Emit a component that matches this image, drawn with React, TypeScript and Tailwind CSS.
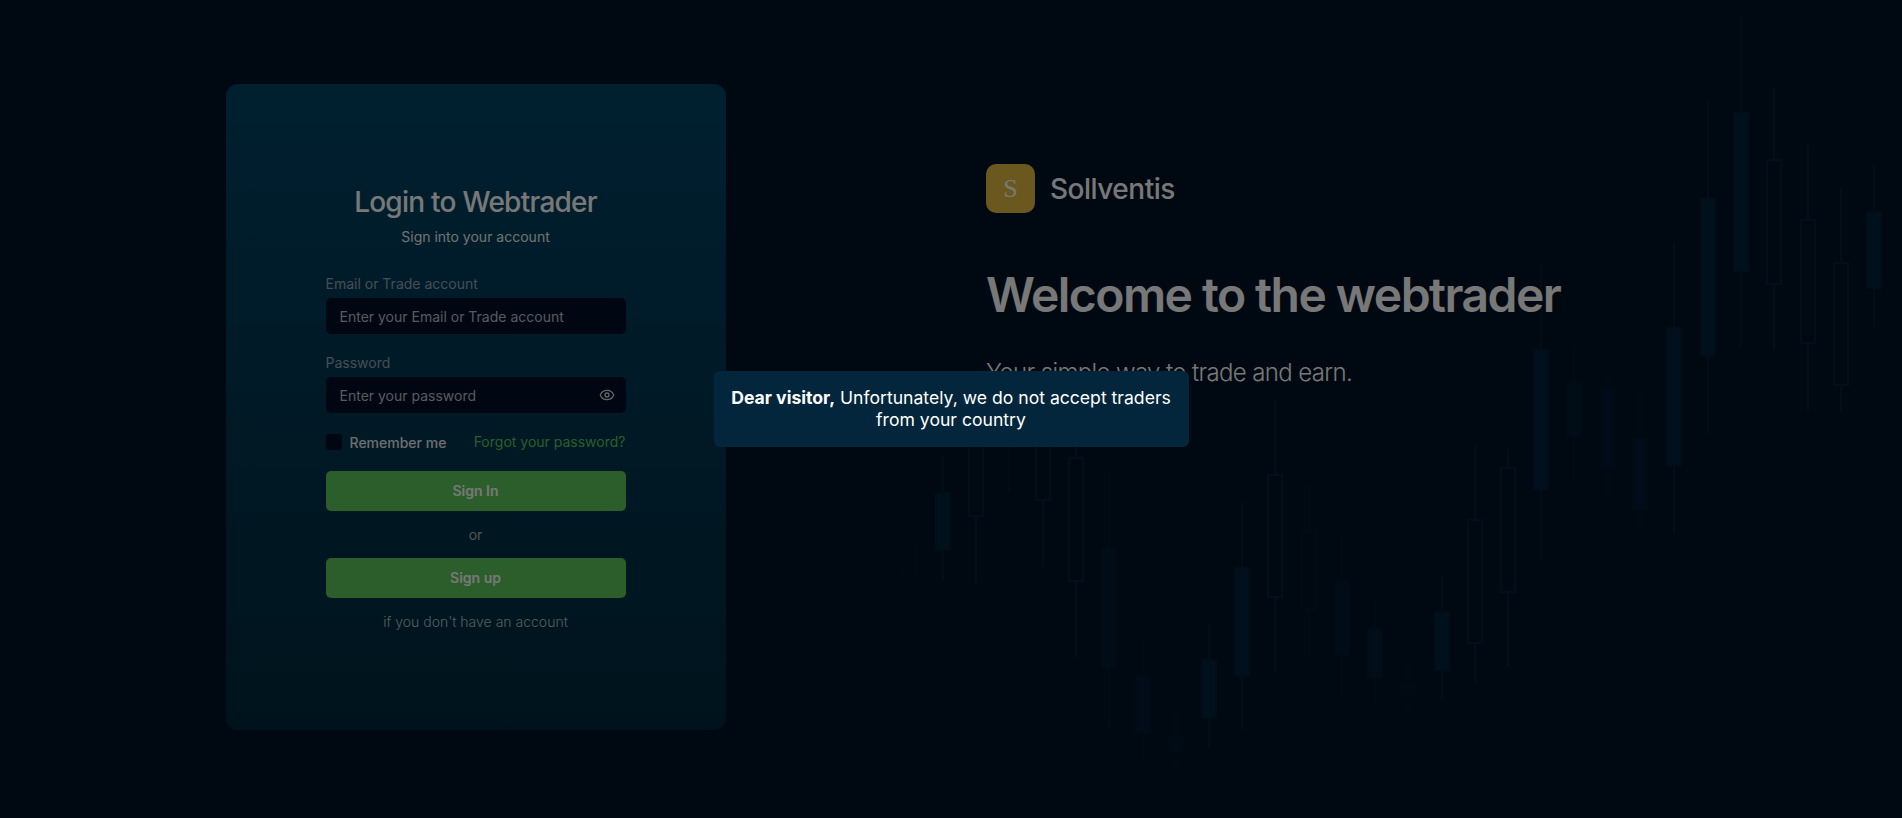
import { Eye } from "lucide-react";

type Candle = { x: number; top: number; bottom: number; bodyTop: number; bodyBottom: number; hollow?: boolean; o?: number };

const candles: Candle[] = [
  { x: 909, top: 503, bottom: 617, bodyTop: 543, bodyBottom: 574, hollow: true, o: 0.35 },
  { x: 943, top: 457, bottom: 580, bodyTop: 493, bodyBottom: 550, o: 0.85 },
  { x: 976, top: 395, bottom: 583, bodyTop: 400, bodyBottom: 516, hollow: true },
  { x: 1009, top: 400, bottom: 492, bodyTop: 410, bodyBottom: 440, o: 0.7 },
  { x: 1043, top: 400, bottom: 567, bodyTop: 410, bodyBottom: 500, hollow: true },
  { x: 1076, top: 420, bottom: 657, bodyTop: 458, bodyBottom: 581, hollow: true },
  { x: 1109, top: 470, bottom: 727, bodyTop: 548, bodyBottom: 668, o: 0.45 },
  { x: 1143, top: 640, bottom: 763, bodyTop: 676, bodyBottom: 733, o: 0.5 },
  { x: 1176, top: 713, bottom: 767, bodyTop: 737, bodyBottom: 753, o: 0.35 },
  { x: 1209, top: 623, bottom: 747, bodyTop: 660, bodyBottom: 718, o: 0.85 },
  { x: 1242, top: 502, bottom: 730, bodyTop: 568, bodyBottom: 676, o: 0.85 },
  { x: 1275, top: 400, bottom: 672, bodyTop: 475, bodyBottom: 597, hollow: true },
  { x: 1309, top: 485, bottom: 657, bodyTop: 532, bodyBottom: 609, hollow: true, o: 0.45 },
  { x: 1342, top: 535, bottom: 695, bodyTop: 581, bodyBottom: 655, o: 0.45 },
  { x: 1375, top: 598, bottom: 702, bodyTop: 629, bodyBottom: 677, o: 0.6 },
  { x: 1408, top: 662, bottom: 710, bodyTop: 683, bodyBottom: 697, o: 0.3 },
  { x: 1442, top: 575, bottom: 700, bodyTop: 612, bodyBottom: 670, o: 0.85 },
  { x: 1475, top: 446, bottom: 682, bodyTop: 520, bodyBottom: 643, hollow: true },
  { x: 1508, top: 449, bottom: 667, bodyTop: 468, bodyBottom: 592, hollow: true },
  { x: 1541, top: 265, bottom: 558, bodyTop: 350, bodyBottom: 489, o: 0.85 },
  { x: 1574, top: 347, bottom: 480, bodyTop: 383, bodyBottom: 437, o: 0.45 },
  { x: 1608, top: 377, bottom: 500, bodyTop: 388, bodyBottom: 467, o: 0.4 },
  { x: 1640, top: 393, bottom: 530, bodyTop: 439, bodyBottom: 510, o: 0.45 },
  { x: 1674, top: 242, bottom: 534, bodyTop: 328, bodyBottom: 465, o: 0.85 },
  { x: 1708, top: 102, bottom: 433, bodyTop: 199, bodyBottom: 356, o: 0.85 },
  { x: 1741, top: 17, bottom: 348, bodyTop: 113, bodyBottom: 271, o: 0.85 },
  { x: 1774, top: 87, bottom: 350, bodyTop: 160, bodyBottom: 284, hollow: true },
  { x: 1808, top: 145, bottom: 410, bodyTop: 220, bodyBottom: 343, hollow: true },
  { x: 1841, top: 188, bottom: 412, bodyTop: 263, bodyBottom: 385, hollow: true },
  { x: 1874, top: 165, bottom: 327, bodyTop: 212, bodyBottom: 288, o: 0.85 },
];

function CandleChart() {
  return (
    <svg className="absolute inset-0 h-full w-full" viewBox="0 0 1902 818" fill="none">
      {candles.map((c) => (
        <g key={c.x} opacity={c.o ?? 1}>
          <line x1={c.x} x2={c.x} y1={c.top} y2={c.bottom} stroke="#01213b" strokeWidth="2" />
          <rect
            x={c.x - 7}
            y={c.bodyTop}
            width="14"
            height={c.bodyBottom - c.bodyTop}
            fill={c.hollow ? "#001126" : "#012742"}
            stroke="#01213b"
            strokeWidth="2"
          />
        </g>
      ))}
    </svg>
  );
}

function Field({ label, placeholder, eye }: { label: string; placeholder: string; eye?: boolean }) {
  return (
    <div className="flex flex-col">
      <label className="text-sm leading-[20px] text-[#b7c2c8] opacity-80">{label}</label>
      <div className="mt-1 flex h-9 items-center justify-between rounded-[5px] bg-[#000f29] pr-[11px] pl-[14px]">
        <span className="pt-[2px] text-sm leading-[20px] text-[#b9c0c6]">{placeholder}</span>
        {eye && <Eye size={16} strokeWidth={2} className="text-[#d5dadd]" />}
      </div>
    </div>
  );
}

export default function App() {
  return (
    <div className="relative h-screen w-full overflow-hidden bg-[#001126] font-['Inter',sans-serif] text-white">
      <CandleChart />

      <div className="relative flex h-full">
        <div className="flex w-[951px] justify-center pt-[84px]">
          <div className="flex h-[646px] w-[500px] flex-col items-center rounded-xl bg-gradient-to-b from-[#024466] to-[#012a3d] pt-[101px]">
            <h1 className="text-[28px] leading-[34px] font-medium tracking-[-0.75px]">Login to Webtrader</h1>
            <p className="mt-[8px] text-sm leading-[20px] text-[#f0f0f0]">Sign into your account</p>

            <div className="mt-[27px] flex w-[300px] flex-col">
              <Field label="Email or Trade account" placeholder="Enter your Email or Trade account" />
              <div className="mt-[19px]">
                <Field label="Password" placeholder="Enter your password" eye />
              </div>

              <div className="mt-[19px] flex h-5 items-center justify-between">
                <div className="flex items-center gap-2">
                  <span className="h-4 w-4 rounded-[3px] bg-[#000f29]" />
                  <span className="pt-[2px] text-sm leading-[20px] font-medium text-[#e6eaec]">Remember me</span>
                </div>
                <a className="text-sm text-[#5cc85a]">Forgot your password?</a>
              </div>

              <button className="mt-[19px] h-10 rounded-[5px] bg-[#5cc85a] text-sm font-semibold">Sign In</button>
              <p className="mt-[14px] text-center text-sm leading-[20px] text-[#aab4ba]">or</p>
              <button className="mt-[13px] h-10 rounded-[5px] bg-[#5cc85a] text-sm font-semibold">Sign up</button>
              <p className="mt-[14px] text-center text-sm leading-[20px] font-light text-[#b7c2c8]">
                if you don't have an account
              </p>
            </div>
          </div>
        </div>

        <div className="flex flex-1 flex-col items-start pt-[164px] pl-[35px]">
          <div className="flex items-center gap-[15px]">
            <div className="flex h-[49px] w-[49px] items-center justify-center rounded-[10px] bg-[#e3bb40]">
              <span className="font-['Liberation_Serif',serif] text-[26px]">S</span>
            </div>
            <span className="text-[28px] font-medium tracking-[-0.5px]">Sollventis</span>
          </div>
          <h2 className="mt-[53px] text-[48px] leading-[58px] font-semibold tracking-[-1.55px]">Welcome to the webtrader</h2>
          <p className="mt-[34px] text-[24px] leading-[30px] font-light tracking-[-0.63px]">Your simple way to trade and earn.</p>
        </div>
      </div>

      <div className="absolute inset-0 flex items-center justify-center bg-black/[0.53]">
        <div className="w-[475px] rounded-md bg-[#03263c] px-4 py-[16px] text-center text-[17.6px] leading-[22px] text-white">
          <b className="font-bold">Dear visitor,</b> Unfortunately, we do not accept traders from your country
        </div>
      </div>
    </div>
  );
}
